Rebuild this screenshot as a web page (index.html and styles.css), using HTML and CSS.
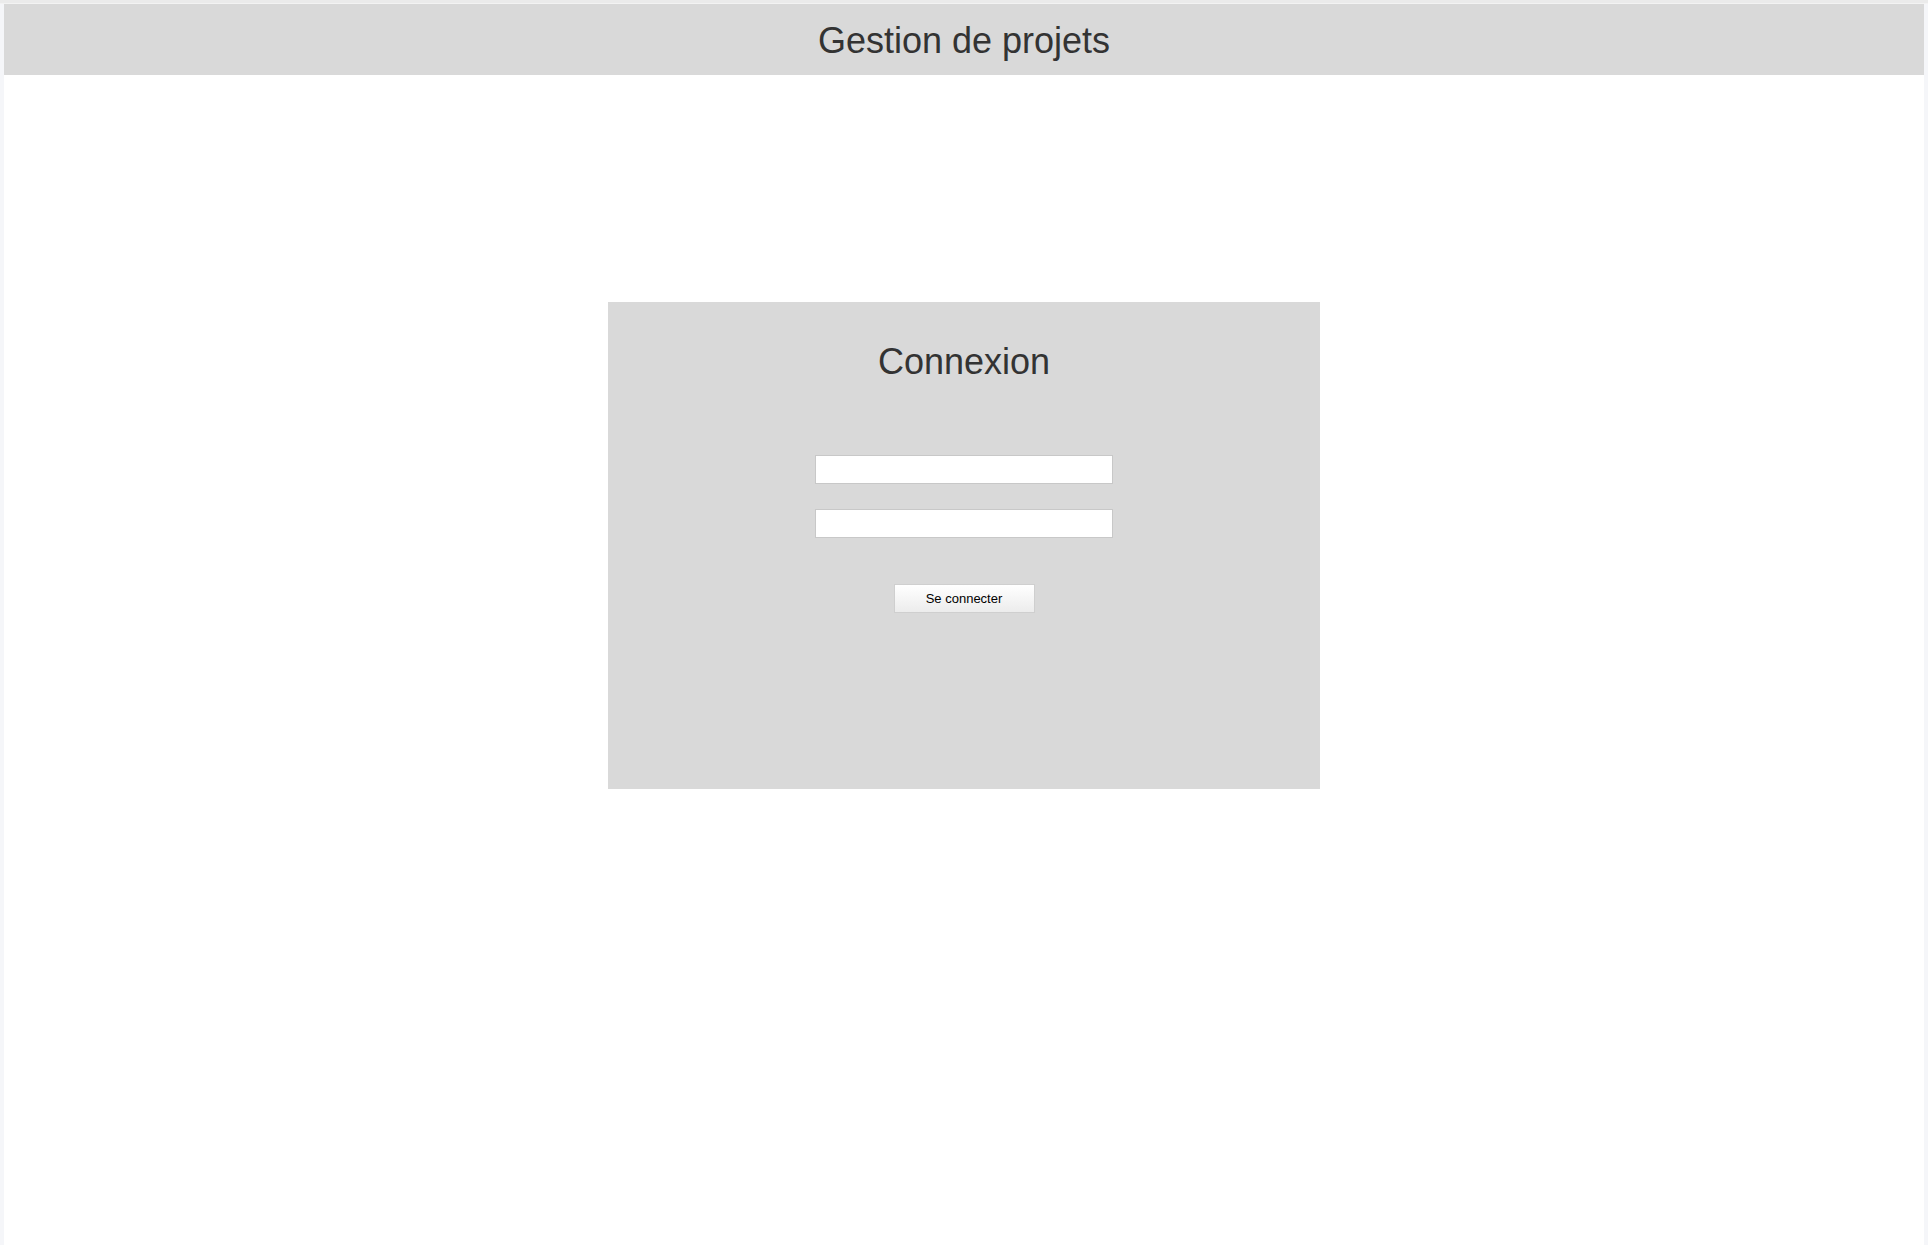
FILE: index.html
```html
<!DOCTYPE html>
<html lang="fr">
<head>
<meta charset="utf-8">
<title>Gestion de projets</title>
<link rel="stylesheet" href="styles.css">
</head>
<body>
<div class="topstrip"></div>
<div class="frame">
  <header class="site-header">
    <h1 class="site-title">Gestion de projets</h1>
  </header>
  <main class="main">
    <section class="login-card">
      <h2 class="login-title">Connexion</h2>
      <form class="login-form">
        <input class="field" type="text" name="login">
        <input class="field" type="password" name="password">
        <button class="btn" type="button">Se connecter</button>
      </form>
    </section>
  </main>
</div>
</body>
</html>
```

FILE: styles.css
```css
html, body {
  margin: 0;
  padding: 0;
  height: 100%;
}
body {
  background: #f5f6f9;
  font-family: "Liberation Sans", Arial, sans-serif;
  color: #333;
  display: flex;
  flex-direction: column;
}
.topstrip {
  height: 3px;
  background: #ebebeb;
  border-bottom: 1px solid #f3f3f3;
  flex: none;
}
.frame {
  flex: 1;
  margin: 0 4px;
  background: #fff;
  display: flex;
  flex-direction: column;
}
.site-header {
  height: 71px;
  background: #d9d9d9;
  display: flex;
  align-items: center;
  justify-content: center;
}
.site-title {
  margin: 0;
  font-size: 36px;
  font-weight: normal;
  color: #333;
  position: relative;
  top: 1px;
}
.main {
  padding-top: 227px;
  display: flex;
  justify-content: center;
}
.login-card {
  width: 712px;
  height: 487px;
  box-sizing: border-box;
  background: #d9d9d9;
  padding-top: 39px;
  display: flex;
  flex-direction: column;
  align-items: center;
}
.login-title {
  margin: 0;
  font-size: 36px;
  font-weight: normal;
  color: #333;
  line-height: 41px;
}
.login-form {
  margin-top: 73px;
  display: flex;
  flex-direction: column;
  align-items: center;
}
.field {
  width: 298px;
  height: 29px;
  box-sizing: border-box;
  border: 1px solid #c8c8c8;
  background: #fff;
  margin: 0 0 25px 0;
  padding: 2px 4px;
  font: 13px "Liberation Sans", Arial, sans-serif;
}
.field + .field {
  margin-bottom: 46px;
}
.btn {
  width: 141px;
  height: 29px;
  box-sizing: border-box;
  border: 1px solid #cfcfcf;
  background: linear-gradient(#ffffff, #ececec);
  font: 13px "Liberation Sans", Arial, sans-serif;
  color: #000;
  padding: 0;
  margin: 0;
}
```
